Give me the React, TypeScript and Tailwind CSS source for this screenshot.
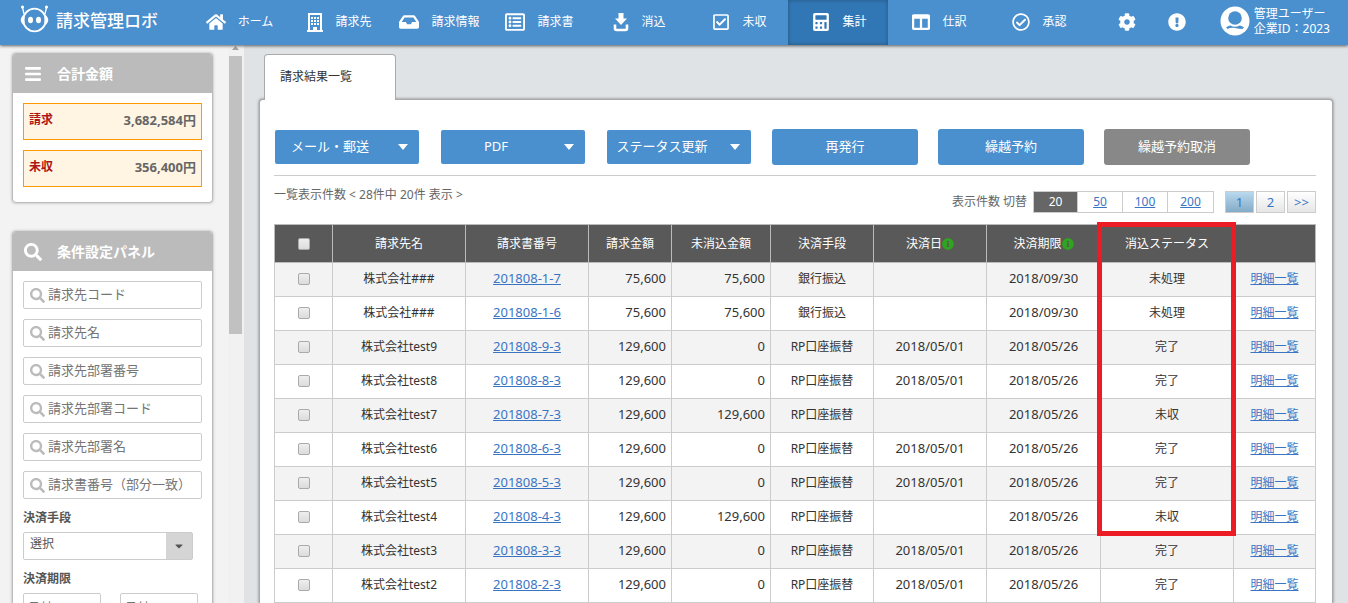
import type { ReactNode } from "react";
import {
  FaBars,
  FaCalculator,
  FaCaretDown,
  FaCog,
  FaColumns,
  FaExclamationCircle,
  FaHome,
  FaInbox,
  FaInfoCircle,
  FaRegCheckCircle,
  FaRegCheckSquare,
  FaRegListAlt,
  FaSearch,
} from "react-icons/fa";

interface Invoice {
  client: string;
  number: string;
  amount: string;
  unpaid: string;
  method: string;
  paidOn: string;
  dueOn: string;
  status: string;
}

const invoices: Invoice[] = [
  { client: "株式会社###", number: "201808-1-7", amount: "75,600", unpaid: "75,600", method: "銀行振込", paidOn: "", dueOn: "2018/09/30", status: "未処理" },
  { client: "株式会社###", number: "201808-1-6", amount: "75,600", unpaid: "75,600", method: "銀行振込", paidOn: "", dueOn: "2018/09/30", status: "未処理" },
  { client: "株式会社test9", number: "201808-9-3", amount: "129,600", unpaid: "0", method: "RP口座振替", paidOn: "2018/05/01", dueOn: "2018/05/26", status: "完了" },
  { client: "株式会社test8", number: "201808-8-3", amount: "129,600", unpaid: "0", method: "RP口座振替", paidOn: "2018/05/01", dueOn: "2018/05/26", status: "完了" },
  { client: "株式会社test7", number: "201808-7-3", amount: "129,600", unpaid: "129,600", method: "RP口座振替", paidOn: "", dueOn: "2018/05/26", status: "未収" },
  { client: "株式会社test6", number: "201808-6-3", amount: "129,600", unpaid: "0", method: "RP口座振替", paidOn: "2018/05/01", dueOn: "2018/05/26", status: "完了" },
  { client: "株式会社test5", number: "201808-5-3", amount: "129,600", unpaid: "0", method: "RP口座振替", paidOn: "2018/05/01", dueOn: "2018/05/26", status: "完了" },
  { client: "株式会社test4", number: "201808-4-3", amount: "129,600", unpaid: "129,600", method: "RP口座振替", paidOn: "", dueOn: "2018/05/26", status: "未収" },
  { client: "株式会社test3", number: "201808-3-3", amount: "129,600", unpaid: "0", method: "RP口座振替", paidOn: "2018/05/01", dueOn: "2018/05/26", status: "完了" },
  { client: "株式会社test2", number: "201808-2-3", amount: "129,600", unpaid: "0", method: "RP口座振替", paidOn: "2018/05/01", dueOn: "2018/05/26", status: "完了" },
];

const searchFields = [
  "請求先コード",
  "請求先名",
  "請求先部署番号",
  "請求先部署コード",
  "請求先部署名",
  "請求書番号（部分一致）",
];

const RobotIcon = () => (
  <svg width="30" height="28" viewBox="0 0 30 28" fill="none" aria-hidden="true">
    <path d="M2.500 2.500 4 9M26.500 2.500 25 9" stroke="#fff" strokeWidth="1.300" />
    <circle cx="2.500" cy="2" r="1.600" fill="#fff" />
    <circle cx="26.500" cy="2" r="1.600" fill="#fff" />
    <circle cx="14.500" cy="15" r="11.300" stroke="#fff" strokeWidth="1.800" />
    <path d="M4.500 9.500C-.5 12 -.5 18 4.500 20.500zM24.500 9.500c5 2.500 5 8.500 0 11z" fill="#fff" />
    <ellipse cx="10.500" cy="15" rx="2.500" ry="3.300" fill="#fff" />
    <ellipse cx="18.500" cy="15" rx="2.500" ry="3.300" fill="#fff" />
  </svg>
);

const BuildingIcon = () => (
  <svg width="16" height="19" viewBox="0 0 16 19" fill="#fff" aria-hidden="true">
    <path fillRule="evenodd" d="M1 0h14v17h1v2H0v-2h1zM3 2v15h3v-3h4v3h3V2z" />
    <path d="M4 4h2v2H4zM7 4h2v2H7zM10 4h2v2h-2zM4 7h2v2H4zM7 7h2v2H7zM10 7h2v2h-2zM4 10h2v2H4zM7 10h2v2H7zM10 10h2v2h-2z" />
  </svg>
);

const DownloadIcon = () => (
  <svg width="16" height="19" viewBox="0 0 16 19" fill="none" aria-hidden="true">
    <path d="M5.500 0h5v5.500H14L8 12 2 5.500h3.500z" fill="#fff" />
    <path d="M2 11.500v4q0 1.500 1.500 1.500h9q1.500 0 1.500-1.500v-4" stroke="#fff" strokeWidth="2.600" />
  </svg>
);

const UserIcon = () => (
  <svg width="30" height="30" viewBox="0 0 30 30" aria-hidden="true">
    <circle cx="15" cy="15" r="14.500" fill="#fff" />
    <circle cx="15" cy="12" r="6.800" fill="#4a8fce" />
    <path d="M6 21.500q2.500-1.800 4.500-2 4.500 2.600 9 0 2 .2 4.500 2-3.500 4-9 4t-9-4z" fill="#4a8fce" />
    <path d="M7.500 23q3.500-2 7.500-1t7.500 1q-3 4.500-7.500 4.500T7.500 23z" fill="#fff" />
  </svg>
);

const navItems: { label: string; icon: ReactNode; active?: boolean }[] = [
  { label: "ホーム", icon: <FaHome className="size-5" /> },
  { label: "請求先", icon: <BuildingIcon /> },
  { label: "請求情報", icon: <FaInbox className="size-5" /> },
  { label: "請求書", icon: <FaRegListAlt className="size-5" /> },
  { label: "消込", icon: <DownloadIcon /> },
  { label: "未収", icon: <FaRegCheckSquare className="size-[18px]" /> },
  { label: "集計", icon: <FaCalculator className="size-[18px]" />, active: true },
  { label: "仕訳", icon: <FaColumns className="size-[18px]" /> },
  { label: "承認", icon: <FaRegCheckCircle className="size-[18px]" /> },
];

const Header = () => (
  <header className="relative z-10 flex h-[45px] shrink-0 items-stretch bg-[#4a8fce] text-white shadow-[0_1px_3px_rgba(0,0,0,0.6)]">
    <a href="#" className="flex w-[188px] shrink-0 items-center gap-[6px] pb-2 pl-5">
      <RobotIcon />
      <span className="pt-1 text-[17px] font-medium leading-5">請求管理ロボ</span>
    </a>
    <nav className="flex">
      {navItems.map((item) => (
        <a
          key={item.label}
          href="#"
          className={`flex w-[100px] items-center justify-center gap-3 pb-px pl-[3px] whitespace-nowrap ${
            item.active ? "bg-[#3277b5] shadow-[inset_0_0_4px_rgba(0,0,0,0.3)]" : ""
          }`}
        >
          {item.icon}
          <span>{item.label}</span>
        </a>
      ))}
    </nav>
    <div className="ml-auto flex items-center pr-[18px] pb-px">
      <button type="button" aria-label="設定" className="flex w-[50px] justify-center">
        <FaCog className="size-[18px]" />
      </button>
      <button type="button" aria-label="お知らせ" className="flex w-[50px] justify-center">
        <FaExclamationCircle className="size-[18px]" />
      </button>
      <a href="#" className="flex items-center gap-1 pb-[2px] pl-[18px]">
        <UserIcon />
        <span className="whitespace-nowrap leading-[15px]">
          管理ユーザー
          <br />
          企業ID：2023
        </span>
      </a>
    </div>
  </header>
);

const PanelBox = ({ icon, title, children }: { icon: ReactNode; title: string; children: ReactNode }) => (
  <section className="shrink-0 overflow-hidden rounded border border-[#bbb] bg-white shadow-[0_0_3px_rgba(0,0,0,0.3)]">
    <h2 className="flex h-[39px] items-center gap-[15px] bg-[#bbb] px-[11px] text-sm font-bold text-white">
      {icon}
      {title}
    </h2>
    <div className="px-[10px] pt-[10px] pb-[15px]">{children}</div>
  </section>
);

const TotalRow = ({ label, value }: { label: string; value: string }) => (
  <div className="flex h-[37px] justify-between border border-[#f90] bg-[#fff5e2] px-[5px] pt-[7px] font-bold leading-[18px]">
    <span className="text-[#b01515]">{label}</span>
    <span className="text-[13px] text-[#666]">{value}</span>
  </div>
);

const Sidebar = () => (
  <aside className="flex w-[244px] shrink-0 overflow-hidden bg-[#f3f3f3]">
    <div className="flex flex-1 flex-col gap-7 pt-2 pr-[15px] pl-3">
      <PanelBox icon={<FaBars className="size-[18px]" />} title="合計金額">
        <div className="flex flex-col gap-[10px]">
          <TotalRow label="請求" value="3,682,584円" />
          <TotalRow label="未収" value="356,400円" />
        </div>
      </PanelBox>
      <PanelBox icon={<FaSearch className="size-[18px]" />} title="条件設定パネル">
        <div className="flex flex-col gap-[10px]">
          {searchFields.map((field) => (
            <label key={field} className="flex h-7 items-center gap-[3px] rounded-xs border border-[#ccc] px-[6px]">
              <FaSearch className="size-[15px] shrink-0 text-[#bbb]" />
              <input
                type="text"
                aria-label={field}
                placeholder={field}
                className="w-full min-w-0 text-[13px] outline-none placeholder:text-[#757575]"
              />
            </label>
          ))}
        </div>
        <label htmlFor="method" className="mt-[10px] block font-bold leading-[18px]">
          決済手段
        </label>
        <div className="relative mt-[5px] h-7 w-[170px]">
          <select id="method" className="h-full w-full appearance-none rounded-xs border border-[#ccc] bg-white px-[6px] pb-1">
            <option>選択</option>
          </select>
          <span className="pointer-events-none absolute inset-y-px right-px flex w-[26px] items-center justify-center bg-[#d5d5d5]">
            <FaCaretDown className="size-3" />
          </span>
        </div>
        <div className="mt-[10px] font-bold leading-[18px]">決済期限</div>
        <div className="mt-[5px] flex gap-[19px]">
          <input type="text" aria-label="決済期限 開始" placeholder="日付" className="h-7 w-[78px] rounded-xs border border-[#ccc] px-1 placeholder:text-[#757575]" />
          <input type="text" aria-label="決済期限 終了" placeholder="日付" className="h-7 w-[78px] rounded-xs border border-[#ccc] px-1 placeholder:text-[#757575]" />
        </div>
      </PanelBox>
    </div>
    {/* Scrollbar */}
    <div className="flex w-4 flex-col items-center bg-[#f1f1f1] pr-px">
      <svg width="7" height="4" viewBox="0 0 7 4" className="mt-px mb-[6px] shrink-0" aria-hidden="true">
        <path d="M0 4 3.500 0 7 4z" fill="#a3a3a3" />
      </svg>
      <div className="h-[278px] w-[13px] shrink-0 bg-[#c1c1c1]" />
    </div>
  </aside>
);

const MenuButton = ({ label }: { label: string }) => (
  <button
    type="button"
    className="mx-[11px] flex h-[34px] w-[144px] items-center rounded-xs bg-[#4a8fce] pr-[11px] text-[13px] whitespace-nowrap text-white"
  >
    <span className="w-[110px] text-center">{label}</span>
    <svg width="10" height="6" viewBox="0 0 10 6" className="ml-auto" aria-hidden="true">
      <path d="M0 0h10L5 6z" fill="#fff" />
    </svg>
  </button>
);

const PlainButton = ({ label, muted }: { label: string; muted?: boolean }) => (
  <button
    type="button"
    className={`mx-[10px] h-9 w-[146px] rounded-[3px] text-[13px] text-white ${muted ? "bg-[#888]" : "bg-[#4a8fce]"}`}
  >
    {label}
  </button>
);

const Pagination = () => (
  <div className="flex items-center self-end pt-1">
    <span className="mr-[6px]">表示件数 切替</span>
    <div className="flex h-[22px] divide-x divide-[#ccc] border border-[#ccc] leading-5">
      <span className="w-11 bg-[#666] text-center text-white">20</span>
      {["50", "100", "200"].map((size) => (
        <a key={size} href="#" className="w-[45px] text-center text-[#3a75c4] underline">
          {size}
        </a>
      ))}
    </div>
    <div className="ml-[11px] flex gap-[2px] text-[13px] leading-5 text-[#3a75c4]">
      <a href="#" className="h-[22px] w-[29px] border border-[#ccc] bg-linear-to-b from-[#b9d9ee] to-[#84abc8] text-center">1</a>
      <a href="#" className="h-[22px] w-[29px] border border-[#ccc] bg-linear-to-b from-white to-[#e6e6e6] text-center">2</a>
      <a href="#" className="h-[22px] w-[29px] border border-[#ccc] bg-linear-to-b from-white to-[#e6e6e6] text-center">&gt;&gt;</a>
    </div>
  </div>
);

const Tick = ({ label }: { label: string }) => (
  <input
    type="checkbox"
    aria-label={label}
    className="mx-auto block size-3 appearance-none rounded-xs border border-[#aaa] bg-linear-to-b from-[#eee] to-[#dcdcdc]"
  />
);

const InfoIcon = () => <FaInfoCircle className="inline size-3 align-[-2px] text-[#2ea51f]" />;

const InvoiceTable = () => (
  <table className="w-full table-fixed border-collapse border border-[#ccc] text-center text-[#333]">
    <colgroup>
      <col className="w-[58px]" />
      <col className="w-[133px]" />
      <col className="w-[123px]" />
      <col className="w-[83px]" />
      <col className="w-[99px]" />
      <col className="w-[103px]" />
      <col className="w-[113px]" />
      <col className="w-[114px]" />
      <col className="w-[133px]" />
      <col />
    </colgroup>
    <thead>
      <tr className="h-[38px] bg-[#595959] text-white *:border *:border-[#bbb] *:p-0 *:font-normal">
        <th>
          <Tick label="すべて選択" />
        </th>
        <th>請求先名</th>
        <th>請求書番号</th>
        <th>請求金額</th>
        <th>未消込金額</th>
        <th>決済手段</th>
        <th>
          決済日
          <InfoIcon />
        </th>
        <th>
          決済期限
          <InfoIcon />
        </th>
        <th className="relative">
          消込ステータス
          {/* Highlight frame around the status column */}
          <span className="pointer-events-none absolute -top-[3px] -right-[3px] -left-[4px] h-[314px] border-5 border-[#ec1c24]" />
        </th>
        <th aria-label="明細"></th>
      </tr>
    </thead>
    <tbody>
      {invoices.map((row) => (
        <tr key={row.number} className="h-[34px] odd:bg-[#f3f3f3] *:border *:border-[#ccc] *:pt-0 *:pb-px">
          <td>
            <Tick label={`${row.number} を選択`} />
          </td>
          <td>{row.client}</td>
          <td className="text-[13px]">
            <a href="#" className="text-[#3a75c4] underline">
              {row.number}
            </a>
          </td>
          <td className="pr-[5px] text-right text-[13px]">{row.amount}</td>
          <td className="pr-[5px] text-right text-[13px]">{row.unpaid}</td>
          <td>{row.method}</td>
          <td className="text-[13px]">{row.paidOn}</td>
          <td className="text-[13px]">{row.dueOn}</td>
          <td>{row.status}</td>
          <td>
            <a href="#" className="text-[#3a75c4] underline">
              明細一覧
            </a>
          </td>
        </tr>
      ))}
    </tbody>
  </table>
);

export default function App() {
  return (
    <div className="flex h-screen flex-col overflow-hidden bg-[#dfe3e6] font-['Noto_Sans','Noto_Sans_CJK_JP',sans-serif] text-xs text-[#555]">
      <Header />
      <div className="flex min-h-0 flex-1">
        <Sidebar />
        <main className="flex min-w-0 flex-1 flex-col pt-[9px] pr-[15px] pl-[15px]">
          <a
            href="#"
            className="relative z-1 ml-[5px] -mb-px flex h-[46px] w-[132px] shrink-0 items-center rounded-t border border-b-0 border-[#aaa] bg-white px-[15px] pb-[2px] text-[#333]"
          >
            請求結果一覧
          </a>
          <section className="flex-1 rounded-t border border-b-0 border-[#aaa] bg-white pt-[29px] pr-4 pl-[14px] shadow-[0_0_3px_rgba(0,0,0,0.5)]">
            <div className="-mx-[10px] flex items-center">
              <MenuButton label="メール・郵送" />
              <MenuButton label="PDF" />
              <MenuButton label="ステータス更新" />
              <PlainButton label="再発行" />
              <PlainButton label="繰越予約" />
              <PlainButton label="繰越予約取消" muted />
            </div>
            <div className="mt-[10px] mb-[11px] flex items-start justify-between border-t border-[#ccc] pt-[11px] text-[#666]">
              <p>一覧表示件数 &lt; 28件中 20件 表示 &gt;</p>
              <Pagination />
            </div>
            <InvoiceTable />
          </section>
        </main>
      </div>
    </div>
  );
}
